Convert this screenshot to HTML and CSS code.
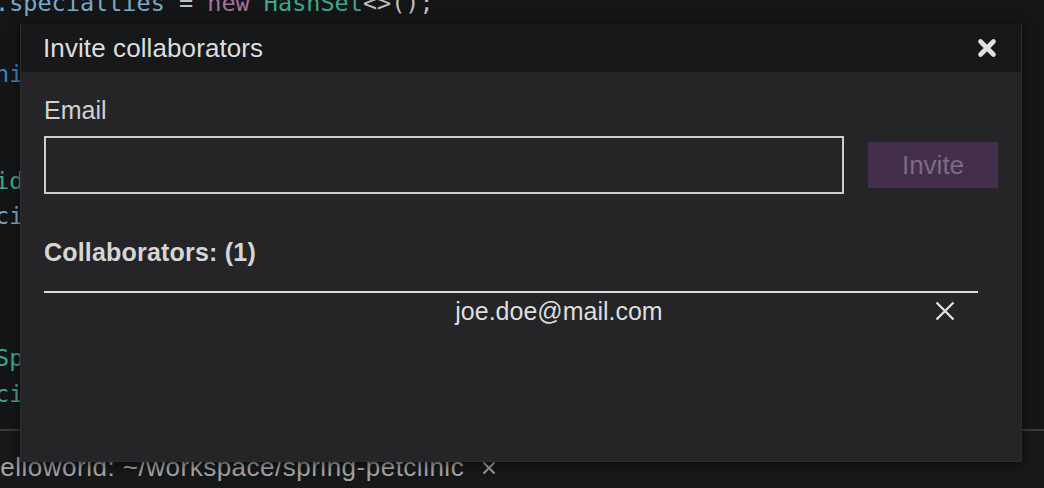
FILE: index.html
```html
<!DOCTYPE html>
<html lang="en">
<head>
    <meta charset="UTF-8">
    <meta name="viewport" content="width=device-width, initial-scale=1.0">
    <title>Invite collaborators</title>
    <link rel="stylesheet" href="styles.css">
</head>
<body>
    <div class="workbench">
<pre class="editor"><span class="prop">.specialties</span> = <span class="kw">new</span> <span class="type">HashSet</span>&lt;&gt;();

<span class="blue">ni</span>


<span class="type">id</span>
<span class="prop">ci</span>



<span class="type">Sp</span>
<span class="teal">ci</span></pre>
        <div class="panel">
            <div class="panel-tab">
                <span class="tab-label">Helloworld: ~/workspace/spring-petclinic</span>
                <svg class="tab-close" width="14" height="14" viewBox="0 0 14 14"><path d="M1.5 1.5 L12.5 12.5 M12.5 1.5 L1.5 12.5" stroke="#9a9a9a" stroke-width="2" fill="none"/></svg>
            </div>
        </div>
    </div>

    <div class="modal">
        <div class="modal-header">
            <span class="modal-title">Invite collaborators</span>
            <button class="modal-close" title="Close">
                <svg width="20" height="20" viewBox="0 0 20 20"><path d="M3.5 3.5 L16.5 16.5 M16.5 3.5 L3.5 16.5" stroke="#e4dfdf" stroke-width="4.6" stroke-linecap="round" fill="none"/></svg>
            </button>
        </div>
        <div class="modal-body">
            <label class="field-label" for="inviteEmail">Email</label>
            <div class="invite-row">
                <input type="text" id="inviteEmail" class="email-input">
                <button class="invite-btn" disabled>Invite</button>
            </div>

            <h3 class="collab-title">Collaborators: (1)</h3>
            <div class="collab-list">
                <div class="collab-row">
                    <span class="collab-email">joe.doe@mail.com</span>
                    <button class="collab-remove" title="Remove">
                        <svg width="20" height="20" viewBox="0 0 20 20"><path d="M1.5 1.5 L18.5 18.5 M18.5 1.5 L1.5 18.5" stroke="#e2e2e2" stroke-width="2.3" fill="none"/></svg>
                    </button>
                </div>
            </div>
        </div>
    </div>
</body>
</html>
```

FILE: styles.css
```css
body { margin: 0; height: 488px; overflow: hidden; background: #141517; font-family: "Liberation Sans", Arial, sans-serif; }

/* editor behind the dialog */
.workbench { display: flex; flex-direction: column; height: 488px; }
.editor { margin: -14px 0 0 -5px; height: 437px; overflow: hidden; font: 23.5px/35.5px "DejaVu Sans Mono", monospace; color: #bdbdbd; white-space: pre; }
.prop { color: #79a9c9; }
.kw { color: #a4729e; }
.type { color: #3ea68a; }
.teal { color: #45a493; }
.blue { color: #3d84c2; }

.panel { flex: 1; margin-top: 6px; border-top: 2px solid #38393b; background: #17181a; }
.panel-tab { display: flex; align-items: center; gap: 18px; margin-left: -19px; padding-top: 21px; }
.tab-label { font-size: 26px; line-height: 30px; letter-spacing: 0.5px; color: #a3a3a3; }
.tab-close { margin-top: 2px; }

/* dialog */
.modal { position: absolute; left: 20px; top: 24px; width: 1002px; height: 438px; box-sizing: border-box; background: #252527; border: 1px solid #2d2d2f; border-top: 0; box-shadow: 0 2px 10px rgba(0, 0, 0, 0.6); }
.modal-header { display: flex; align-items: center; justify-content: space-between; height: 48px; padding: 0 24px 0 22px; background: #17181a; }
.modal-title { font-size: 26px; letter-spacing: 0.1px; color: #dedede; }
.modal-close { display: flex; padding: 0; border: 0; background: none; cursor: pointer; }

.modal-body { padding: 23px 23px 0 23px; }
.field-label { display: block; font-size: 25px; line-height: 30px; color: #d2d2d2; }
.invite-row { display: flex; align-items: center; gap: 24px; margin-top: 11px; }
.email-input { flex: 1; height: 58px; margin: 0; padding: 0 10px; box-sizing: border-box; border: 2px solid #cfcfcf; border-radius: 0; background: transparent; color: #ddd; font: inherit; font-size: 25px; }
.invite-btn { width: 130px; height: 46px; padding: 0; border: 0; background: #432f4b; color: #7d6a85; font-family: inherit; font-size: 26px; }

.collab-title { margin: 43px 0 0; font-size: 25px; line-height: 30px; font-weight: bold; letter-spacing: 0.2px; color: #d6d6d6; }
.collab-list { margin: 24px 20px 0 0; border-top: 2px solid #dcdcdc; }
.collab-row { display: flex; align-items: center; padding-top: 3px; font-size: 25px; line-height: 30px; }
.collab-email { flex: 1; padding-left: 162px; text-align: center; color: #dedede; }
.collab-remove { display: flex; justify-content: center; width: 66px; padding: 0; border: 0; background: none; cursor: pointer; }
```
